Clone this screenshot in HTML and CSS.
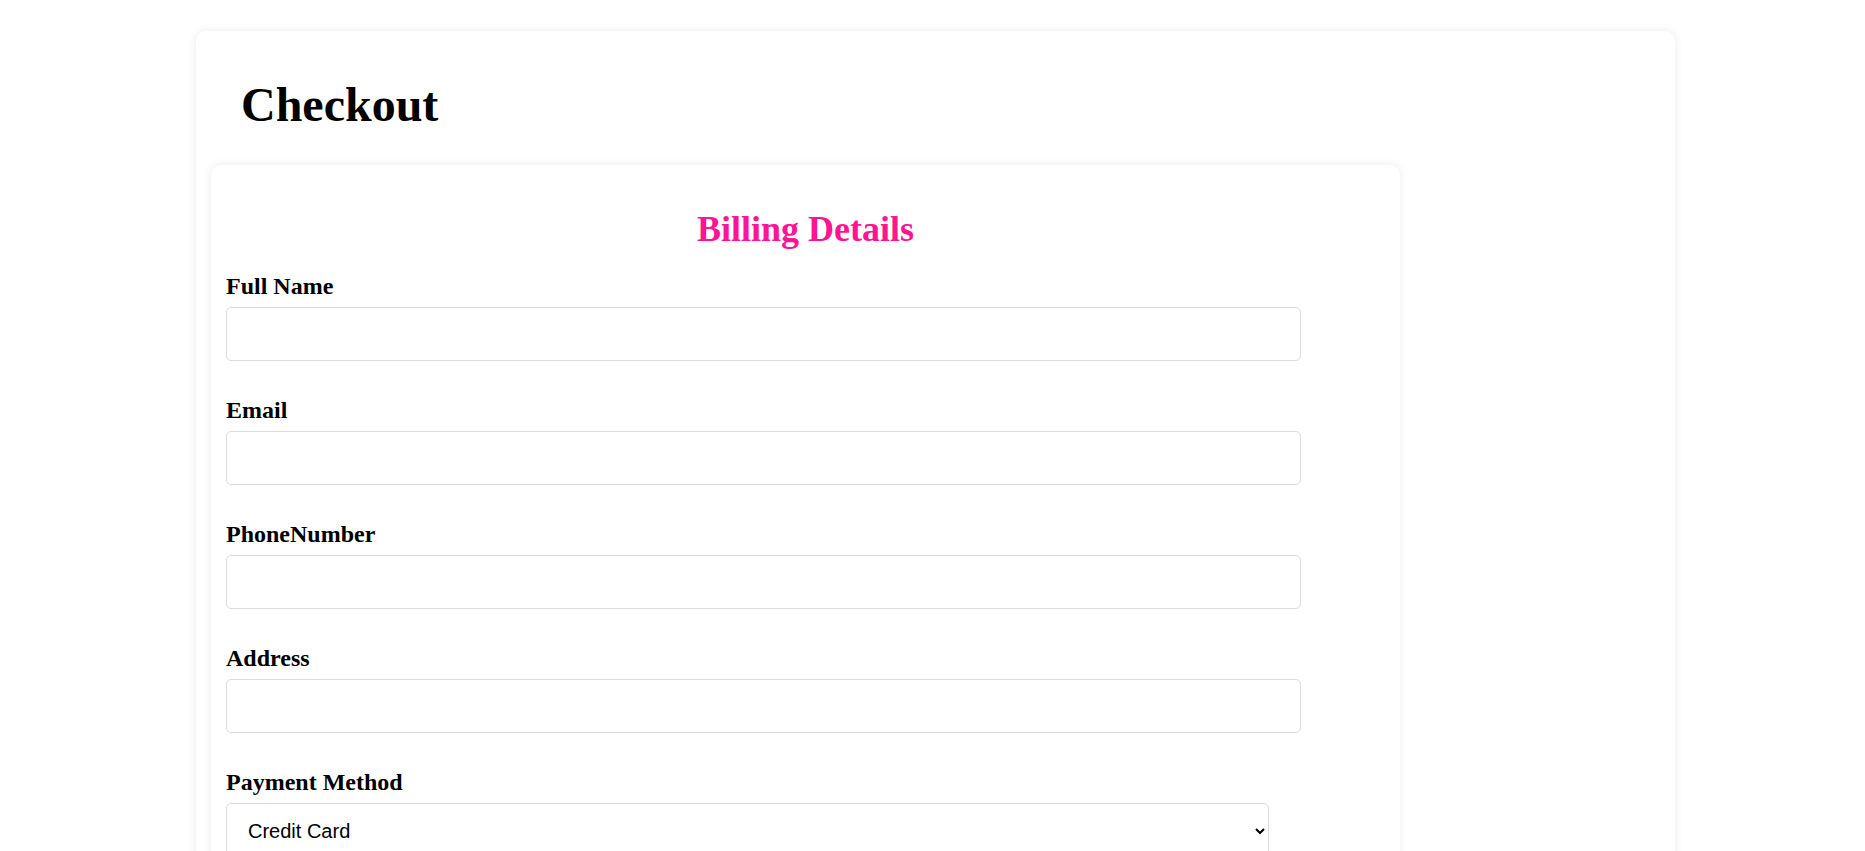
FILE: index.html
```html
<!DOCTYPE html>
<html lang="en">
<head>
<meta charset="utf-8">
<title>Checkout</title>
<link rel="stylesheet" href="styles.css">
</head>
<body>
  <div class="container">
    <h1 class="page-title">Checkout</h1>
    <div class="billing-card">
      <h2 class="billing-title">Billing Details</h2>
      <form class="billing-form">
        <div class="form-group">
          <label class="form-label" for="name">Full Name</label>
          <input class="form-input" id="name" type="text">
        </div>
        <div class="form-group">
          <label class="form-label" for="email">Email</label>
          <input class="form-input" id="email" type="email">
        </div>
        <div class="form-group">
          <label class="form-label" for="phone">PhoneNumber</label>
          <input class="form-input" id="phone" type="tel">
        </div>
        <div class="form-group">
          <label class="form-label" for="address">Address</label>
          <input class="form-input" id="address" type="text">
        </div>
        <div class="form-group">
          <label class="form-label" for="payment">Payment Method</label>
          <select class="form-select" id="payment">
            <option>Credit Card</option>
            <option>PayPal</option>
            <option>Cash on Delivery</option>
          </select>
        </div>
      </form>
    </div>
  </div>
</body>
</html>
```

FILE: styles.css
```css
html, body {
  margin: 0;
  padding: 0;
  background: #ffffff;
}

body {
  font-family: "Liberation Serif", "Times New Roman", serif;
  color: #000;
}

.container {
  width: 1479px;
  box-sizing: border-box;
  margin: 31px 0 0 196px;
  padding: 12px 15px 30px;
  background: #fff;
  border-radius: 10px;
  box-shadow: 0 0 10px rgba(0, 0, 0, 0.08);
}

.page-title {
  font-size: 48px;
  font-weight: bold;
  line-height: normal;
  margin: 34px 0 33px 30px;
}

.billing-card {
  width: 1189px;
  box-sizing: border-box;
  padding: 15px;
  background: #fff;
  border-radius: 10px;
  box-shadow: 0 0 10px rgba(0, 0, 0, 0.08);
}

.billing-title {
  font-size: 36px;
  font-weight: bold;
  line-height: normal;
  color: #ff1493;
  text-align: center;
  margin: 28px 0 23px;
}

.billing-form {
  width: 90%;
}

.form-group {
  margin-bottom: 36px;
}

.form-label {
  display: block;
  font-size: 24px;
  font-weight: bold;
  line-height: normal;
  margin-bottom: 7px;
}

.form-input {
  display: block;
  width: 100%;
  box-sizing: content-box;
  padding: 15px;
  border: 1px solid #dcdcdc;
  border-radius: 5px;
  font-family: "Liberation Sans", Arial, sans-serif;
  font-size: 19.2px;
  background: #fff;
  margin: 0;
}

.form-select {
  display: block;
  width: 100%;
  box-sizing: border-box;
  padding: 15px 15px 15px 17px;
  border: 1px solid #dcdcdc;
  border-radius: 5px;
  font-family: "Liberation Sans", Arial, sans-serif;
  font-size: 20px;
  background: #fff;
  color: #000;
  margin: 0;
}
```
